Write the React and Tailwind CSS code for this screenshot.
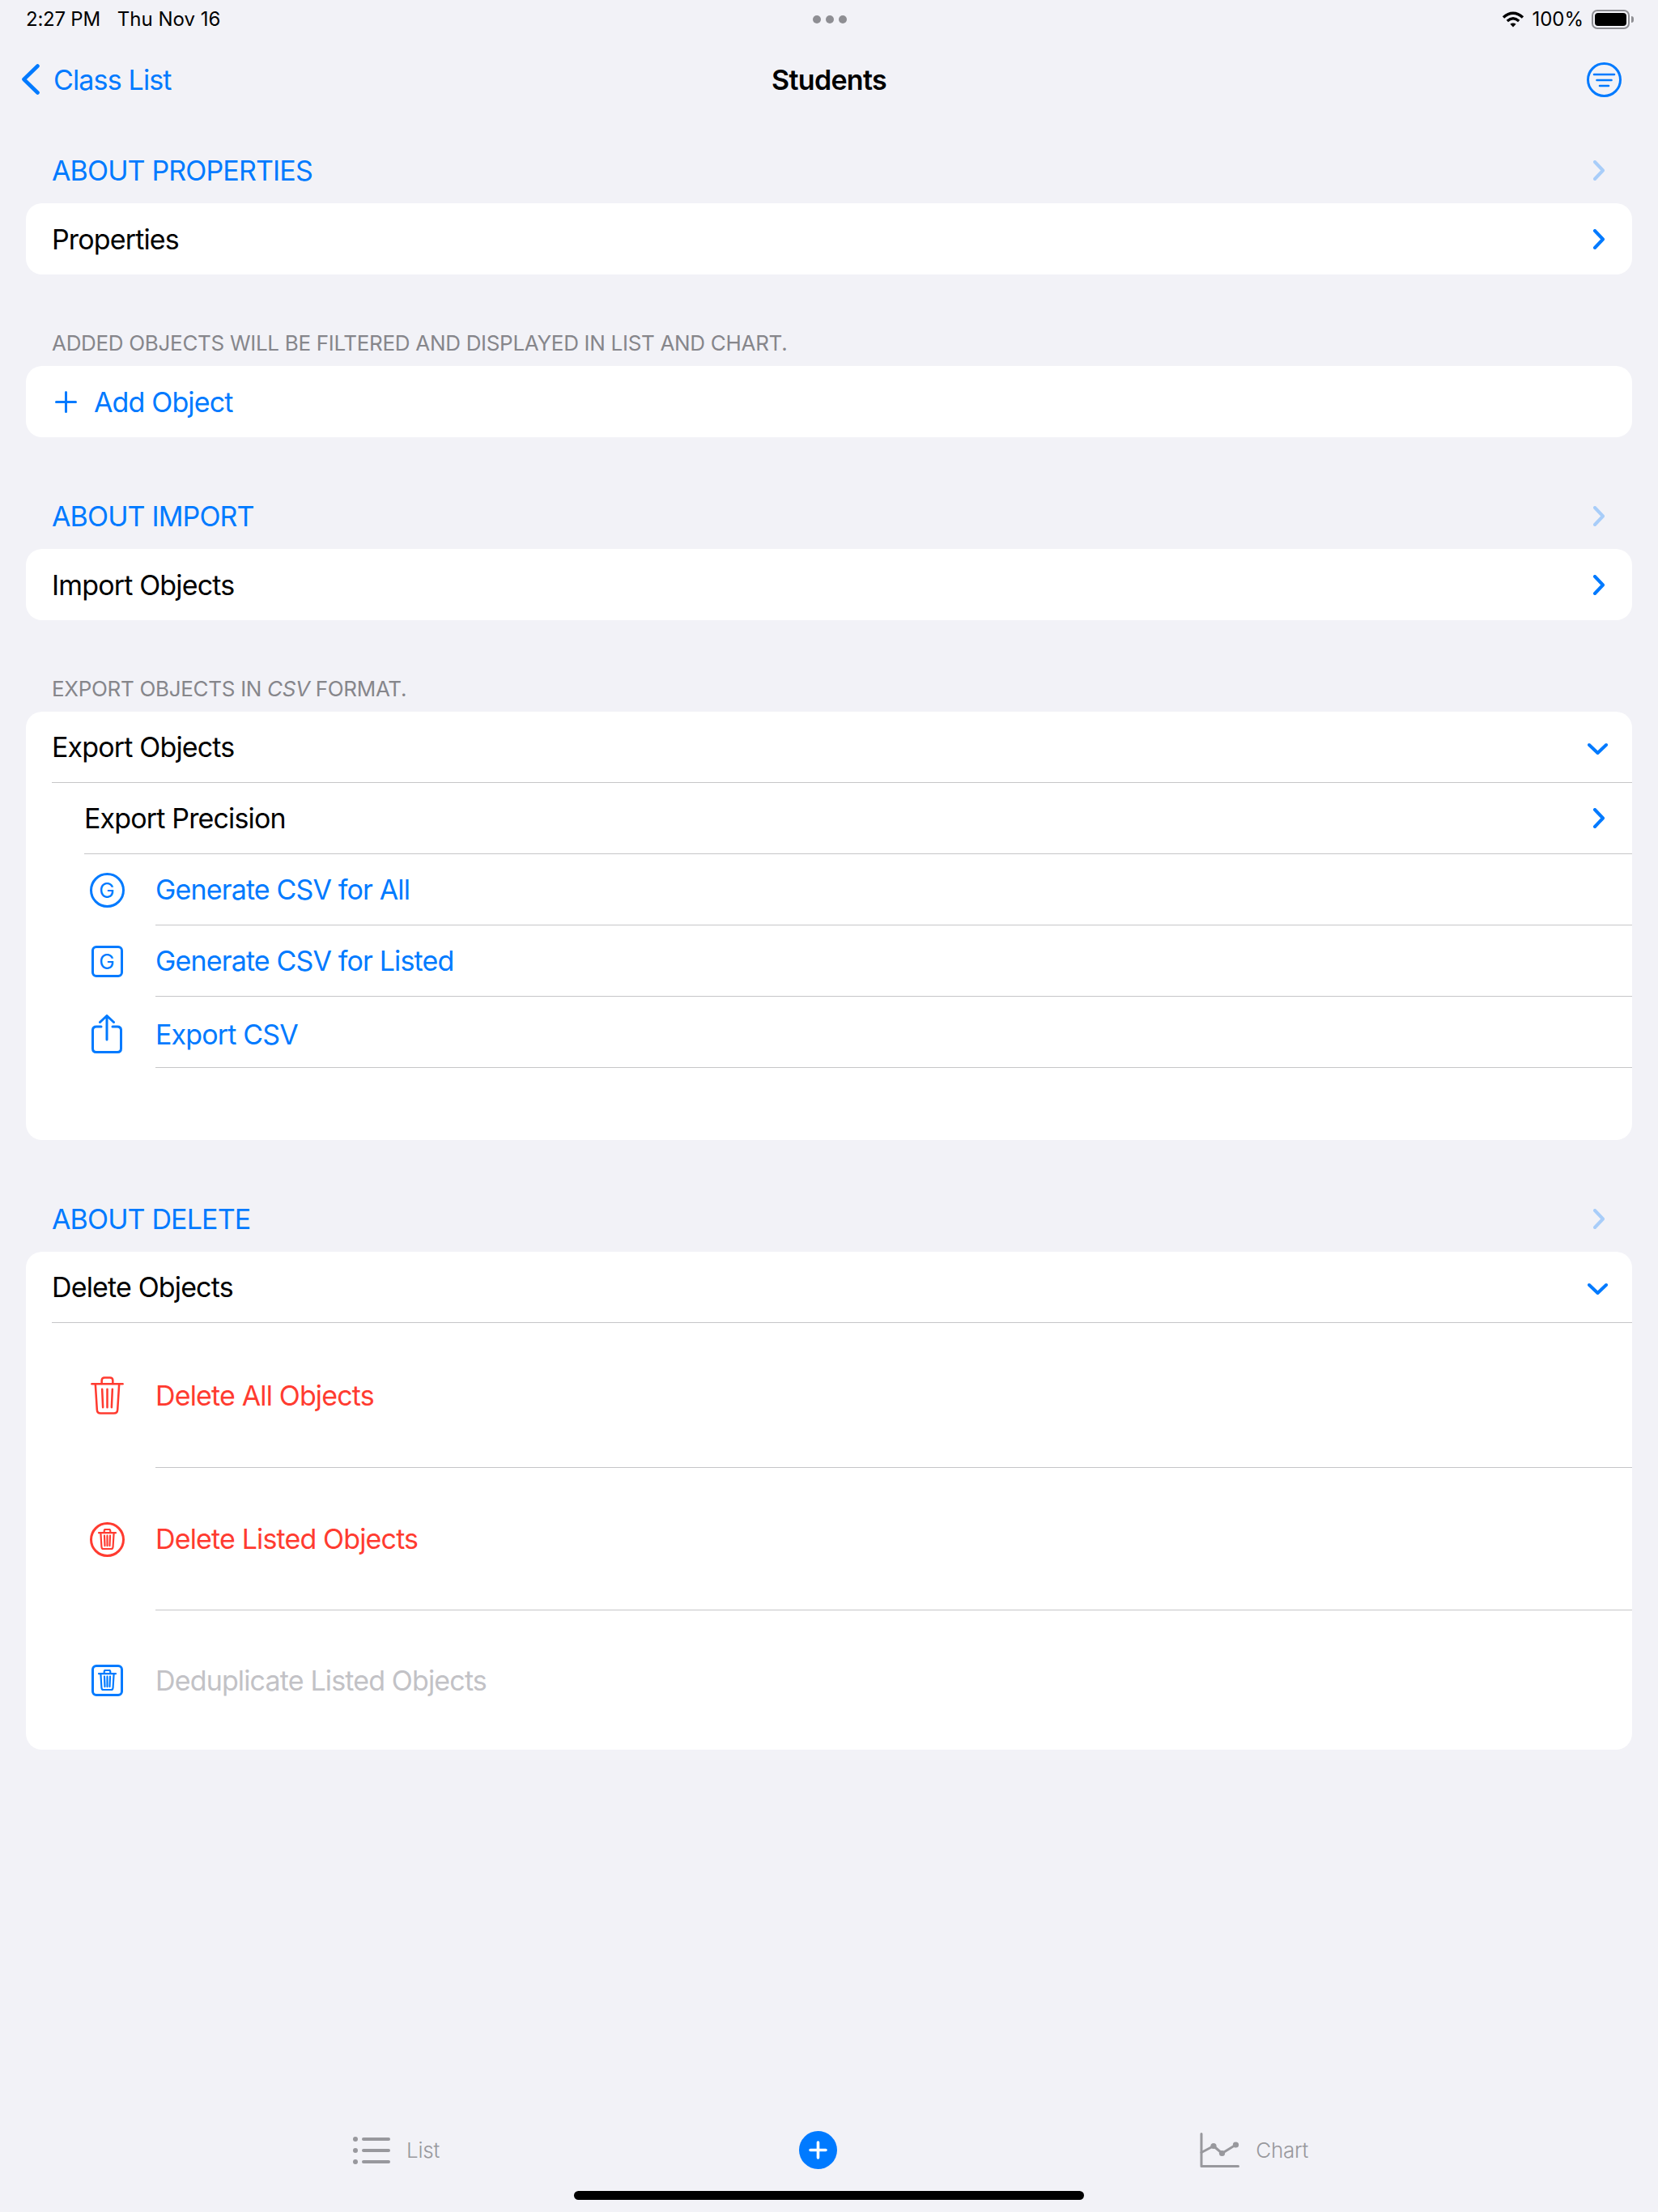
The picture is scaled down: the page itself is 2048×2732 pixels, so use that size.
import React from 'react'

const Chevron = ({ dir = 'right', faded }) => {
  const paths = {
    right: 'M3 2 L13 12.5 L3 23',
    down: 'M2 3 L12.5 13 L23 3',
  }
  const size = dir === 'right' ? 'w-[16px] h-[25px]' : 'w-[25px] h-[16px] mt-[4px]'
  const box = dir === 'right' ? '0 0 16 25' : '0 0 25 16'
  return (
    <svg viewBox={box} className={`${size} ${faded ? 'opacity-30' : ''}`} fill="none" stroke="#007aff" strokeWidth="4" strokeLinecap="round" strokeLinejoin="round">
      <path d={paths[dir]} />
    </svg>
  )
}

const Trash = ({ className, stroke = '#007aff', sw = 2.6 }) => (
  <svg viewBox="0 0 42 48" className={className} fill="none" stroke={stroke} strokeWidth={sw} strokeLinecap="round" strokeLinejoin="round">
    <path d="M1.5 9.5 H40.5" />
    <path d="M14 9 V5 Q14 1.5 17.5 1.5 H24.5 Q28 1.5 28 5 V9" />
    <path d="M6 10 L8 42 Q8.3 46.5 12.5 46.5 H29.5 Q33.7 46.5 34 42 L36 10" />
    <path d="M14.5 16 L15.5 39 M21 16 V39 M27.5 16 L26.5 39" />
  </svg>
)

const Row = ({ children, h = 'h-[88px]', inset = 'ml-0', last }) => (
  <div className={`${inset} ${h} flex items-center ${last ? '' : 'border-b border-[#c6c6c8]'}`}>
    {children}
  </div>
)

const IconRow = ({ icon, label, color = 'text-[#007aff]', h, last }) => (
  <div className={`${h || 'h-[88px]'} flex`}>
    <div className="w-[136px] pl-[76px] shrink-0 flex items-center">
      <div className="w-[48px] flex items-center justify-center">{icon}</div>
    </div>
    <div className={`flex-1 ml-[24px] flex items-center ${last ? '' : 'border-b border-[#c6c6c8]'}`}>
      <span className={color}>{label}</span>
    </div>
  </div>
)

const BlueHeader = ({ children }) => (
  <div className="h-[82px] pl-[64px] pr-[65px] flex items-center justify-between text-[#007aff]">
    <span>{children}</span>
    <Chevron faded />
  </div>
)

const GrayHeader = ({ children }) => (
  <div className="h-[57px] pl-[64px] flex items-center text-[26px] tracking-[-0.012em] text-[#86868b]">
    <span>{children}</span>
  </div>
)

const Card = ({ children }) => (
  <div className="mx-[32px] bg-white rounded-[20px] overflow-hidden">{children}</div>
)

const SimpleCard = ({ label }) => (
  <Card>
    <div className="h-[88px] pl-[32px] pr-[33px] flex items-center justify-between">
      <span>{label}</span>
      <Chevron />
    </div>
  </Card>
)

export default function App() {
  return (
    <div className="h-[2732px] flex flex-col bg-[#f2f2f7] text-black text-[34px] tracking-[-0.025em] font-['Inter',sans-serif]">
      {/* status bar */}
      <div className="h-[48px] pl-[32px] pr-[30px] grid grid-cols-3 items-center text-[24px]">
        <div className="flex gap-[21px]">
          <span className="tracking-[-0.01em]">2:27 PM</span>
          <span className="tracking-normal">Thu Nov 16</span>
        </div>
        <div className="flex justify-center gap-[6px]">
          <span className="w-[10px] h-[10px] rounded-full bg-[#8e8e93]" />
          <span className="w-[10px] h-[10px] rounded-full bg-[#8e8e93]" />
          <span className="w-[10px] h-[10px] rounded-full bg-[#8e8e93]" />
        </div>
        <div className="flex items-center justify-end tracking-normal">
          <svg viewBox="0 0 28 20" className="w-[28px] h-[20px] mr-[9px]" fill="none" stroke="#000" strokeWidth="3.4" strokeLinecap="butt">
            <path d="M2 7.5 C9.5 0.5 18.5 0.5 26 7.5" />
            <path d="M6.8 12 C11.5 7.8 16.5 7.8 21.2 12" />
            <path d="M14 19.5 L10.4 15.8 C12.6 14 15.4 14 17.6 15.8 Z" fill="#000" stroke="none" />
          </svg>
          <span>100%</span>
          <div className="ml-[10px] w-[47px] h-[24px] border-[2px] border-[#8e8e93] rounded-[7px] p-[2px]">
            <div className="w-full h-full bg-black rounded-[4px]" />
          </div>
          <div className="ml-[2px] w-[3px] h-[8px] bg-[#8e8e93] rounded-r-full" />
        </div>
      </div>

      {/* nav bar */}
      <div className="h-[100px] px-[27px] grid grid-cols-3 items-center">
        <div className="flex items-center gap-[17px] text-[#007aff]">
          <svg viewBox="0 0 22 38" className="w-[22px] h-[38px]" fill="none" stroke="#007aff" strokeWidth="4.6" strokeLinecap="round" strokeLinejoin="round">
            <path d="M19.5 2.5 L2.5 19 L19.5 35.5" />
          </svg>
          <span>Class List</span>
        </div>
        <div className="text-center font-semibold tracking-[-0.02em]">Students</div>
        <div className="flex justify-end pr-[18px]">
          <svg viewBox="0 0 43 43" className="w-[43px] h-[43px]" fill="none" stroke="#007aff" strokeLinecap="round">
            <circle cx="21.5" cy="21.5" r="20" strokeWidth="3" />
            <path d="M9 15 H34 M12.5 22 H30.5 M16 29 H27" strokeWidth="2.6" />
          </svg>
        </div>
      </div>

      <div className="mt-[21px] flex flex-col gap-[56px]">
        <section>
          <BlueHeader>ABOUT PROPERTIES</BlueHeader>
          <SimpleCard label="Properties" />
        </section>

        <section>
          <GrayHeader>ADDED OBJECTS WILL BE FILTERED AND DISPLAYED IN LIST AND CHART.</GrayHeader>
          <Card>
            <div className="h-[88px] pl-[36px] flex items-center gap-[21px] text-[#007aff]">
              <svg viewBox="0 0 27 27" className="w-[27px] h-[27px]" fill="none" stroke="#007aff" strokeWidth="3" strokeLinecap="round">
                <path d="M13.5 1.5 V25.5 M1.5 13.5 H25.5" />
              </svg>
              <span>Add Object</span>
            </div>
          </Card>
        </section>

        <section>
          <BlueHeader>ABOUT IMPORT</BlueHeader>
          <SimpleCard label="Import Objects" />
        </section>

        <section>
          <GrayHeader>
            <span>EXPORT OBJECTS IN <i>CSV</i> FORMAT.</span>
          </GrayHeader>
          <Card>
            <Row inset="ml-[32px]">
              <div className="flex-1 pr-[30px] flex items-center justify-between">
                <span>Export Objects</span>
                <Chevron dir="down" />
              </div>
            </Row>
            <Row inset="ml-[72px]">
              <div className="flex-1 pr-[33px] flex items-center justify-between">
                <span>Export Precision</span>
                <Chevron />
              </div>
            </Row>
            <IconRow
              label="Generate CSV for All"
              icon={
                <div className="w-[43px] h-[43px] rounded-full border-[3px] border-[#007aff] flex items-center justify-center text-[#007aff] text-[26px] tracking-normal">G</div>
              }
            />
            <IconRow
              label="Generate CSV for Listed"
              icon={
                <div className="w-[39px] h-[39px] rounded-[6px] border-[3px] border-[#007aff] flex items-center justify-center text-[#007aff] text-[26px] tracking-normal">G</div>
              }
            />
            <IconRow
              label={<span className="relative top-[3px]">Export CSV</span>}
              icon={
                <svg viewBox="0 0 38 48" className="w-[38px] h-[48px] relative top-[2px]" fill="none" stroke="#007aff" strokeWidth="3" strokeLinecap="round" strokeLinejoin="round">
                  <path d="M12 15 H6 Q1.5 15 1.5 19.5 V42 Q1.5 46.5 6 46.5 H32 Q36.5 46.5 36.5 42 V19.5 Q36.5 15 32 15 H26" />
                  <path d="M19 31 V2 M10.5 9.5 L19 1.5 L27.5 9.5" />
                </svg>
              }
            />
            <div className="h-[89px]" />
          </Card>
        </section>

        <section>
          <BlueHeader>ABOUT DELETE</BlueHeader>
          <Card>
            <Row inset="ml-[32px]">
              <div className="flex-1 pr-[30px] flex items-center justify-between">
                <span>Delete Objects</span>
                <Chevron dir="down" />
              </div>
            </Row>
            <IconRow
              h="h-[179px]"
              color="text-[#ff3b30]"
              label="Delete All Objects"
              icon={<Trash className="w-[41px] h-[47px]" stroke="#ff3b30" />}
            />
            <IconRow
              h="h-[176px]"
              color="text-[#ff3b30]"
              label="Delete Listed Objects"
              icon={
                <div className="w-[43px] h-[43px] rounded-full border-[3px] border-[#ff3b30] flex items-center justify-center">
                  <Trash className="w-[23px] h-[26px]" stroke="#ff3b30" sw={4} />
                </div>
              }
            />
            <IconRow
              h="h-[172px]"
              last
              color="text-[#c2c2c6]"
              label="Deduplicate Listed Objects"
              icon={
                <div className="w-[39px] h-[39px] rounded-[6px] border-[3px] border-[#007aff] flex items-center justify-center">
                  <Trash className="w-[23px] h-[26px]" sw={4} />
                </div>
              }
            />
          </Card>
        </section>
      </div>

      {/* tab bar */}
      <div className="mt-auto flex flex-col items-center">
        <div className="w-full pl-[436px] pr-[432px] flex items-center justify-between text-[26px] tracking-[-0.01em] text-[#98989d] font-light">
          <div className="flex items-center gap-[20px]">
            <svg viewBox="0 0 46 34" className="w-[46px] h-[34px]" fill="#98989d">
              <circle cx="3" cy="3" r="3" />
              <circle cx="3" cy="17" r="3" />
              <circle cx="3" cy="31" r="3" />
              <rect x="11" y="1" width="35" height="4" rx="2" />
              <rect x="11" y="15" width="35" height="4" rx="2" />
              <rect x="11" y="29" width="35" height="4" rx="2" />
            </svg>
            <span>List</span>
          </div>
          <svg viewBox="0 0 47 47" className="w-[47px] h-[47px] mr-[4px]">
            <circle cx="23.5" cy="23.5" r="23.5" fill="#007aff" />
            <path d="M23.5 14 V33 M14 23.5 H33" stroke="#fff" strokeWidth="3.6" strokeLinecap="round" />
          </svg>
          <div className="flex items-center gap-[20px]">
            <svg viewBox="0 0 49 43" className="w-[49px] h-[43px]" fill="none" stroke="#98989d" strokeWidth="3" strokeLinecap="round" strokeLinejoin="round">
              <path d="M2 1.5 V41.5 H47.5" />
              <path d="M2 24.5 L17 16.5 L27.5 25.5 L44.5 15" />
              <circle cx="17" cy="16.5" r="3.6" fill="#98989d" stroke="none" />
              <circle cx="27.5" cy="25.5" r="3.6" fill="#98989d" stroke="none" />
              <circle cx="44.5" cy="15" r="3.6" fill="#98989d" stroke="none" />
            </svg>
            <span>Chart</span>
          </div>
        </div>
        <div className="mt-[27px] mb-[15px] w-[630px] h-[11px] rounded-full bg-black" />
      </div>
    </div>
  )
}
